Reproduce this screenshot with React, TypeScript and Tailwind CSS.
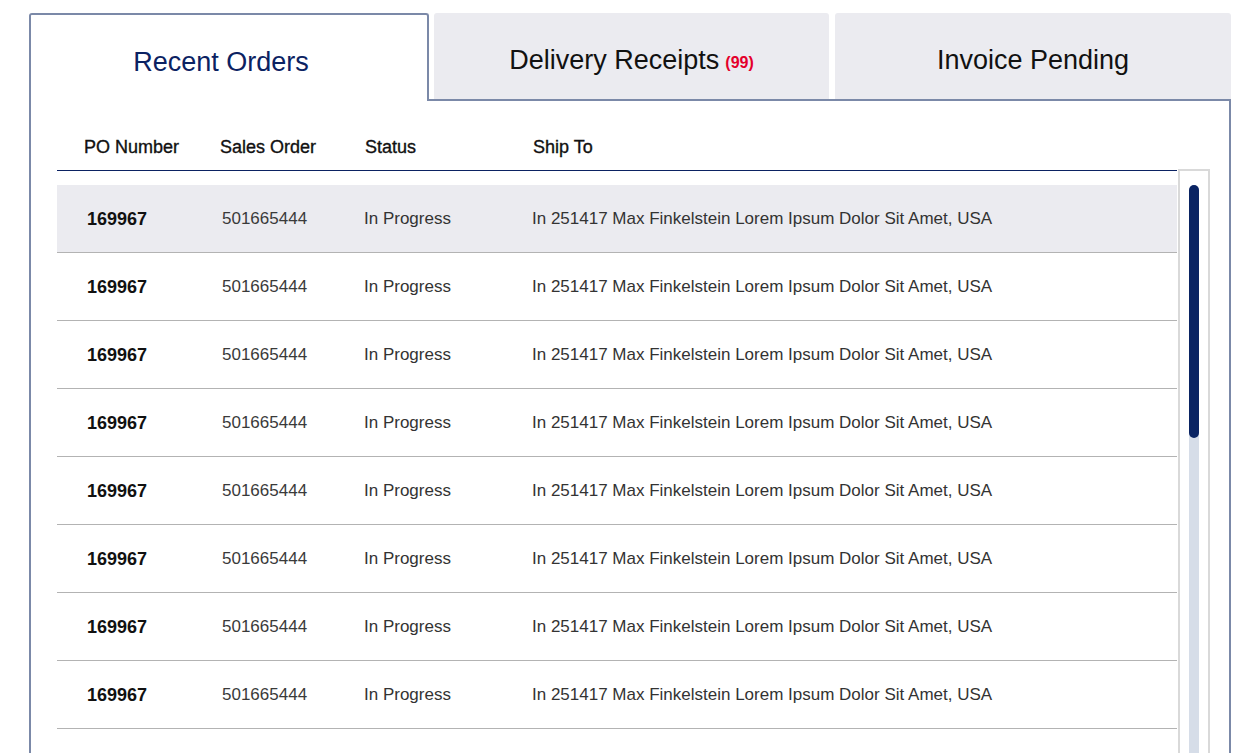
import React from "react";

const rows = Array.from({ length: 8 }, (_, i) => ({
  po: "169967",
  so: "501665444",
  status: "In Progress",
  ship: "In 251417 Max Finkelstein Lorem Ipsum Dolor Sit Amet, USA",
  active: i === 0,
}));

export default function App() {
  return (
    <div className="w-[1242px] h-[753px] overflow-hidden bg-white font-['Liberation_Sans',Arial,sans-serif]">
      <div className="ml-[29px] mt-[13px] w-[1202px] flex flex-col h-[740px]">
        {/* Tabs */}
        <div className="flex items-stretch shrink-0">
          <div className="w-[400px] h-[88px] border-2 border-b-0 border-[#7b89a8] rounded-t-[3px] bg-white flex items-center justify-center pt-[8px] pr-[16px]">
            <span className="text-[27px] text-[#0b2262] leading-none">Recent Orders</span>
          </div>
          <div className="flex-1 flex items-end pl-[5px] gap-[6px] border-b-2 border-[#7b89a8]">
            <div className="w-[395px] h-[86px] bg-[#ebebf0] rounded-t-[3px] flex items-center justify-center pt-[8px]">
              <span className="text-[27px] text-[#111] leading-none">Delivery Receipts</span>
              <span className="ml-[6px] text-[16px] font-bold text-[#e4002b] leading-none self-center mt-[6px]">(99)</span>
            </div>
            <div className="flex-1 h-[86px] bg-[#ebebf0] rounded-t-[3px] flex items-center justify-center pt-[8px]">
              <span className="text-[27px] text-[#111] leading-none">Invoice Pending</span>
            </div>
          </div>
        </div>
        {/* Panel */}
        <div className="flex-1 border-x-2 border-[#7b89a8] flex pl-[26px] pr-[19px] min-h-0 overflow-hidden">
          <div className="w-[1120px] flex flex-col shrink-0">
            <div className="grid grid-cols-[163px_145px_168px_1fr] h-[70px] shrink-0 pt-[36px] border-b border-[#0b2262] text-[18px] leading-[20px] text-[#111] [-webkit-text-stroke:0.35px_#111]">
              <div className="pl-[27px]">PO Number</div>
              <div>Sales Order</div>
              <div>Status</div>
              <div>Ship To</div>
            </div>
            <div className="mt-[14px] flex flex-col shrink-0">
              {rows.map((r, i) => (
                <div
                  key={i}
                  className={`grid grid-cols-[163px_145px_168px_1fr] h-[68px] shrink-0 items-center border-b border-[#b3b3b3] ${r.active ? "bg-[#ebebf0]" : "bg-white"}`}
                >
                  <div className="pl-[30px] text-[18px] font-bold text-[#111] mt-[2px]">{r.po}</div>
                  <div className="pl-[2px] text-[17px] text-[#3a3a3a]">{r.so}</div>
                  <div className="-ml-[1px] text-[17px] text-[#333]">{r.status}</div>
                  <div className="-ml-[1px] text-[17px] text-[#333]">{r.ship}</div>
                </div>
              ))}
            </div>
          </div>
          <div className="ml-[1px] w-[32px] shrink-0 mt-[68px] border-2 border-b-0 border-[#d9d9d9] pt-[14px] flex justify-center">
            <div className="w-[10px] h-full bg-[#d6dde8] rounded-t-full">
              <div className="w-[10px] h-[253px] rounded-full bg-[#0a2463]" />
            </div>
          </div>
        </div>
      </div>
    </div>
  );
}
